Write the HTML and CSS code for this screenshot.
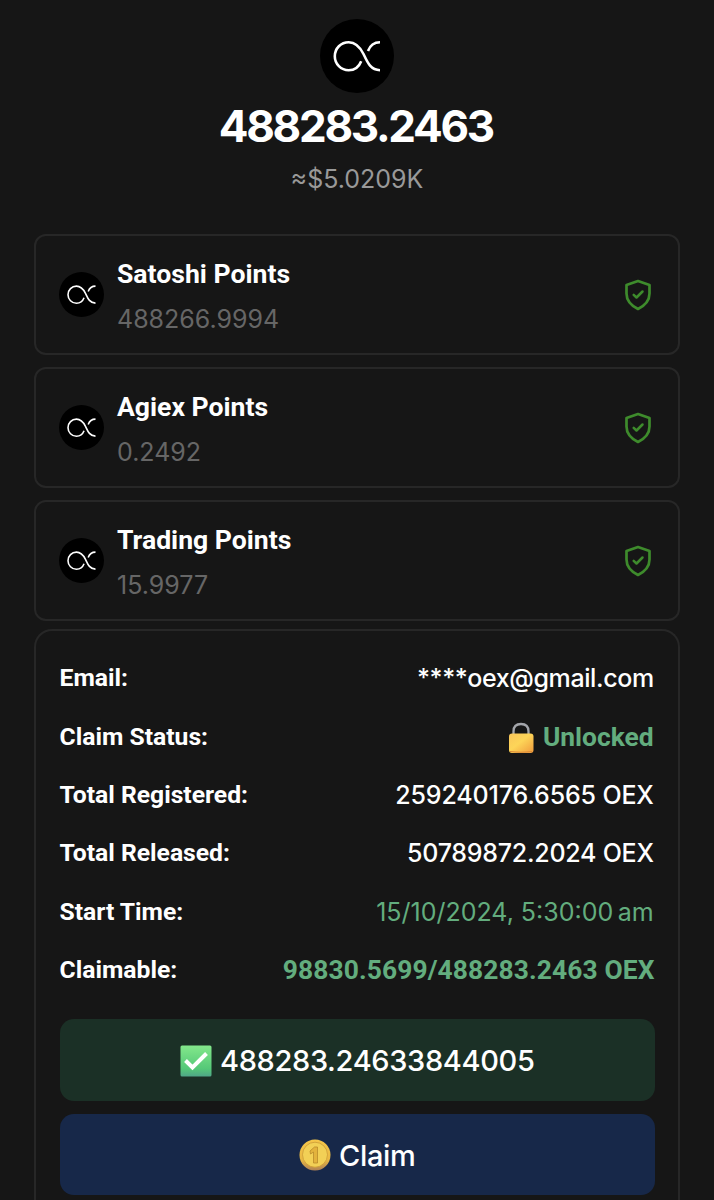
FILE: index.html
```html
<!DOCTYPE html>
<html lang="en">
<head>
    <meta charset="UTF-8">
    <meta name="viewport" content="width=device-width, initial-scale=1.0">
    <title>OEX Points</title>
    <link rel="stylesheet" href="styles.css">
</head>
<body>
    <svg width="0" height="0" class="symbols">
        <symbol id="logo" viewBox="0 0 74 74">
            <circle cx="37" cy="37" r="37" fill="#000"/>
            <path d="M41.200 42.300C39 47.900 34.500 51.300 28.700 51.300C21 51.300 14.800 45 14.800 37.300C14.800 29.300 21 23.200 28.700 23.200C36 23.200 40 28 43.500 35C47.500 43.500 50.500 51 60 51.200M48 32C50 26.500 54 23.200 60 23.200" fill="none" stroke="#fff" stroke-width="2.600"/>
        </symbol>
        <symbol id="shield" viewBox="0 0 28 32">
            <path d="M14 2L25.500 6V14.500C25.500 21.500 21 26.500 14 30C7 26.500 2.500 21.500 2.500 14.500V6Z" fill="none" stroke="#3e8b2c" stroke-width="2.700" stroke-linejoin="round"/>
            <path d="M9.700 15.800L12.500 18.500L18.500 12.500" fill="none" stroke="#3e8b2c" stroke-width="2.500" stroke-linecap="round" stroke-linejoin="round"/>
        </symbol>
    </svg>

    <header class="balance">
        <svg class="balance-logo"><use href="#logo"/></svg>
        <h1 class="balance-total">488283.2463</h1>
        <p class="balance-usd">≈$5.0209K</p>
    </header>

    <main>
        <ul class="points">
            <li class="point-card">
                <svg class="coin"><use href="#logo"/></svg>
                <div class="point-text">
                    <b>Satoshi Points</b>
                    <span>488266.9994</span>
                </div>
                <svg class="shield"><use href="#shield"/></svg>
            </li>
            <li class="point-card">
                <svg class="coin"><use href="#logo"/></svg>
                <div class="point-text">
                    <b>Agiex Points</b>
                    <span>0.2492</span>
                </div>
                <svg class="shield"><use href="#shield"/></svg>
            </li>
            <li class="point-card">
                <svg class="coin"><use href="#logo"/></svg>
                <div class="point-text">
                    <b>Trading Points</b>
                    <span>15.9977</span>
                </div>
                <svg class="shield"><use href="#shield"/></svg>
            </li>
        </ul>

        <section class="claim-panel">
            <div class="row"><b>Email:</b><span class="value email">****oex@gmail.com</span></div>
            <div class="row">
                <b>Claim Status:</b>
                <span class="status">
                    <svg class="lock" viewBox="0 0 26 32">
                        <defs>
                            <linearGradient id="gold" x1="0" y1="0" x2="1" y2="1">
                                <stop offset="0" stop-color="#f9c65a"/>
                                <stop offset=".45" stop-color="#fdd558"/>
                                <stop offset="1" stop-color="#ef9a3c"/>
                            </linearGradient>
                        </defs>
                        <path d="M5.500 13V9.500C5.500 4.500 8.500 2 13 2S20.500 4.500 20.500 9.500V13" fill="none" stroke="#a3a5aa" stroke-width="2.300"/>
                        <rect x="1" y="11.500" width="24.500" height="19.500" rx="3" fill="url(#gold)"/>
                        <path d="M2 29.500Q13 31 24 29.500" fill="none" stroke="#d98736" stroke-width="1.200"/>
                    </svg>
                    Unlocked
                </span>
            </div>
            <div class="row"><b>Total Registered:</b><span class="value">259240176.6565 OEX</span></div>
            <div class="row"><b>Total Released:</b><span class="value released">50789872.2024 OEX</span></div>
            <div class="row"><b>Start Time:</b><span class="green">15/10/2024, 5:30:00&#8239;am</span></div>
            <div class="row"><b>Claimable:</b><span class="claimable">98830.5699/488283.2463 OEX</span></div>

            <button class="btn btn-amount">
                <svg class="check" viewBox="0 0 32 32">
                    <defs>
                        <linearGradient id="mint" x1="0" y1="0" x2="0" y2="1">
                            <stop offset="0" stop-color="#83e88b"/>
                            <stop offset=".75" stop-color="#55c878"/>
                            <stop offset="1" stop-color="#4fa688"/>
                        </linearGradient>
                    </defs>
                    <rect x=".5" y=".5" width="31" height="31" rx="1.500" fill="url(#mint)"/>
                    <path d="M5.500 15.500L12.500 22.500L26.500 8.500" fill="none" stroke="#fff" stroke-width="4"/>
                </svg>
                <span>488283.24633844005</span>
            </button>
            <button class="btn btn-claim">
                <svg class="medal" viewBox="0 0 32 32">
                    <defs>
                        <linearGradient id="coin" x1="0" y1="0" x2="0" y2="1">
                            <stop offset="0" stop-color="#f5c64a"/>
                            <stop offset=".65" stop-color="#e9b944"/>
                            <stop offset="1" stop-color="#ae8055"/>
                        </linearGradient>
                    </defs>
                    <circle cx="16" cy="16" r="15.500" fill="url(#coin)"/>
                    <circle cx="16" cy="15.700" r="12.500" fill="#f2d056" stroke="#cb9b36" stroke-width=".8"/>
                    <path d="M11 12L15.500 8H18.500V24H14.500V13L11.500 15Z" fill="#e3b33d" stroke="#b98a2b" stroke-width=".8"/>
                </svg>
                <span>Claim</span>
            </button>
        </section>
    </main>
</body>
</html>
```

FILE: styles.css
```css
* {
    box-sizing: border-box;
}

body {
    margin: 0;
    height: 1200px;
    overflow: hidden;
    background-color: #161616;
    color: #fff;
    font-family: Inter, "Liberation Sans", sans-serif;
}

.symbols {
    display: block;
}

.balance {
    height: 233.500px;
    padding-top: 19px;
    text-align: center;
}

.balance-logo {
    display: block;
    width: 74px;
    height: 74px;
    margin: 0 auto;
}

.balance-total {
    margin: 6px 0 0;
    font-size: 44px;
    line-height: 54px;
    font-weight: 700;
    font-variation-settings: "opsz" 32;
    letter-spacing: -2.300px;
    text-indent: -2.300px;
}

.balance-usd {
    margin: 10px 0 0;
    font-size: 25px;
    line-height: 32px;
    color: #999;
}

main {
    padding: 0 34px;
}

.points {
    display: grid;
    gap: 12px;
    margin: 0 0 8px;
    padding: 0;
    list-style: none;
}

.point-card {
    display: flex;
    align-items: center;
    height: 121px;
    padding: 0 26px 0 23px;
    border: 2px solid #272727;
    border-radius: 12px;
}

.coin {
    width: 45px;
    height: 45px;
    margin-right: 13px;
}

.point-text {
    display: flex;
    flex: 1;
    flex-direction: column;
    gap: 13px;
    padding-top: 4px;
    font-size: 25px;
    line-height: 32px;
    color: #666;
}

.point-text b {
    font-family: Roboto, sans-serif;
    font-size: 26.600px;
    color: #fff;
}

.shield {
    width: 28px;
    height: 32px;
    margin-top: 1px;
}

.claim-panel {
    height: 572px;
    padding: 18px 23.500px 0;
    border: 2px solid #272727;
    border-bottom: 0;
    border-radius: 18px 18px 0 0;
}

.row {
    display: flex;
    align-items: center;
    justify-content: space-between;
    height: 58.400px;
    padding-right: 0.800px;
    font-size: 25px;
}

.row b {
    font-family: Roboto, sans-serif;
    font-size: 24.700px;
}

.row span {
    padding-top: 1px;
}

.value {
    font-weight: 450;
    letter-spacing: -0.150px;
}

.email {
    letter-spacing: -0.400px;
}

.released {
    letter-spacing: -0.250px;
}

.green {
    color: #63ad7e;
}

.status,
.claimable {
    display: flex;
    align-items: center;
    font-family: Roboto, sans-serif;
    font-size: 26.400px;
    font-weight: 700;
    color: #63ad7e;
}

.claimable {
    margin-right: -0.800px;
    letter-spacing: 0.100px;
}

.lock {
    width: 26px;
    height: 32px;
    margin: 2px 9px 0 0;
}

.btn {
    display: flex;
    align-items: center;
    justify-content: center;
    gap: 8.500px;
    width: 100%;
    height: 82px;
    padding: 2px 0 0;
    border: 0;
    border-radius: 14px;
    font-family: inherit;
    font-size: 29px;
    font-weight: 500;
    letter-spacing: -0.350px;
    color: #fff;
}

.btn-amount {
    margin: 20px 0 13px;
    background-color: #1b3026;
}

.btn-claim {
    height: 81px;
    background-color: #172849;
}

.check,
.medal {
    width: 32px;
    height: 32px;
}
```
